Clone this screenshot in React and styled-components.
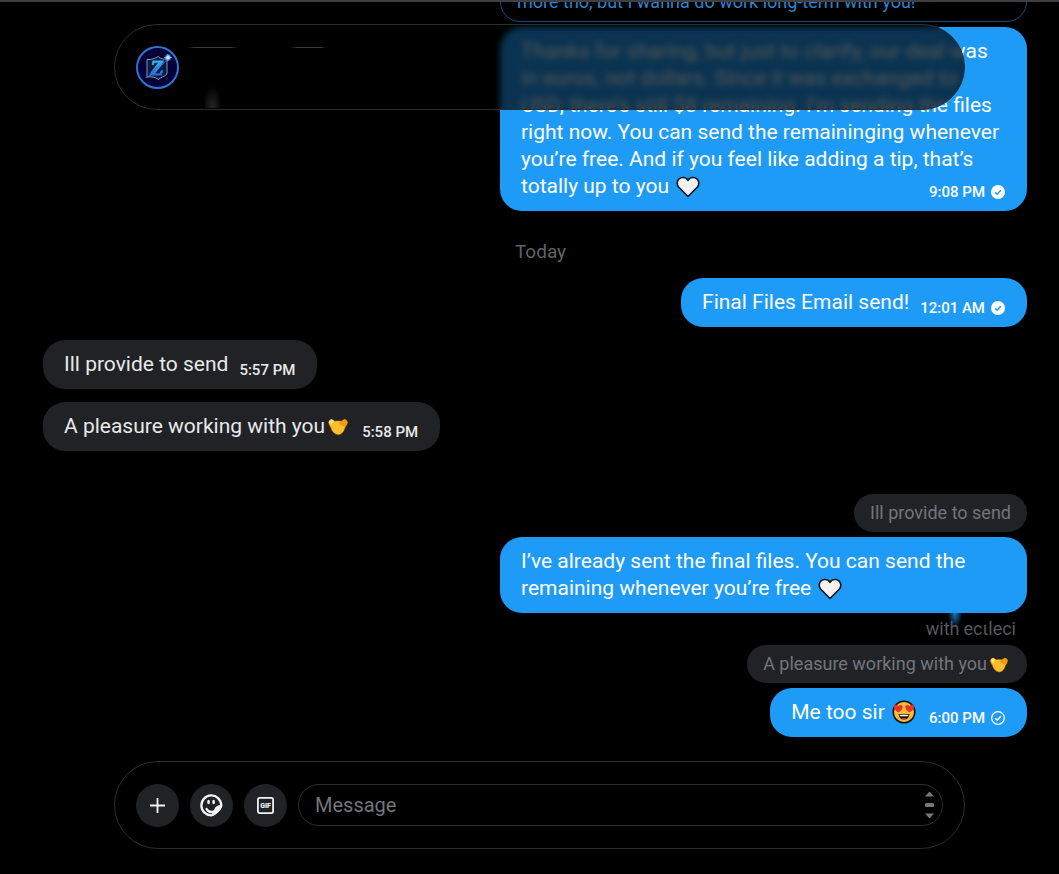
import React from "react";
import styled, { createGlobalStyle, css } from "styled-components";

const GlobalStyle = createGlobalStyle`
  *, *::before, *::after { box-sizing: border-box; }
  body {
    margin: 0;
    background: #000;
    color: #e7e9ea;
    font-family: Roboto, "Liberation Sans", sans-serif;
  }
`;

const Page = styled.div`
  position: relative;
  display: flex;
  flex-direction: column;
  height: 100vh;
  border-top: 2px solid #3e3f45;
  background: #000;
  overflow: hidden;
`;

const pill = css`
  border: 1px solid #2c2d30;
  border-radius: 44px;
`;

const Header = styled.header`
  ${pill}
  position: absolute;
  z-index: 2;
  top: 22px;
  left: 114px;
  right: 94px;
  height: 86px;
  display: flex;
  align-items: center;
  gap: 7px;
  padding: 0 21px;
  background: rgba(0, 0, 0, 0.67);
  backdrop-filter: blur(3px);
`;

const HeaderInfo = styled.div`
  align-self: flex-start;
  padding-top: 22px;
  display: flex;
  gap: 52px;
`;

const Dash = styled.span`
  width: ${(p) => p.$width}px;
  height: 1px;
  background: linear-gradient(to right, transparent, #3c3c3c 20%, #3c3c3c 85%, transparent);
`;

const Smudge = styled.span`
  position: absolute;
  left: 90px;
  bottom: 1px;
  width: 18px;
  height: 24px;
  background: radial-gradient(ellipse at 40% 100%, #262626, transparent 65%);
`;

const Feed = styled.main`
  flex: 1;
  min-height: 0;
  display: flex;
  flex-direction: column;
  justify-content: flex-end;
  padding: 0 32px 24px 43px;
`;

const Group = styled.section`
  flex: none;
  display: flex;
  flex-direction: column;
  align-items: ${(p) => (p.$mine ? "flex-end" : "flex-start")};
  gap: ${(p) => (p.$mine ? 5 : 13)}px;
  margin-top: ${(p) => p.$space || 0}px;
`;

const Quote = styled.blockquote`
  margin: 0;
  padding: 7px 16px;
  border-radius: 20px;
  background: #202226;
  color: #71767b;
  font-size: 18px;
  line-height: 24px;
  white-space: nowrap;
`;

const OutlineQuote = styled(Quote)`
  width: 527px;
  max-width: 100%;
  border: 1px solid #1c4a78;
  background: transparent;
  color: #2f83cf;
`;

const Bubble = styled.article`
  display: grid;
  grid-template-columns: ${(p) => (p.$wide ? "1fr auto" : "auto auto")};
  column-gap: 11px;
  width: ${(p) => (p.$wide ? "527px" : "auto")};
  max-width: 100%;
  padding: 11px 22px 11px 21px;
  border-radius: 22px;
  background: ${(p) => (p.$mine ? "#1d9bf6" : "#202226")};
  color: ${(p) => (p.$mine ? "#fff" : "#e7e9ea")};
`;

const Text = styled.p`
  grid-column: ${(p) => (p.$full ? "1 / -1" : "1")};
  margin: 0;
  font-size: 21px;
  line-height: 27px;
  white-space: pre-line;
`;

const Meta = styled.div`
  grid-column: 2;
  align-self: end;
  display: flex;
  align-items: center;
  gap: 6px;
  font-size: 15px;
  font-weight: 500;
  line-height: 16px;
  white-space: nowrap;
`;

const DayLabel = styled.div`
  flex: none;
  padding: 28px 0 13px 11px;
  text-align: center;
  color: #5f6368;
  font-size: 19px;
  line-height: 26px;
`;

const Remnant = styled.div`
  position: relative;
  height: 32px;
  padding: 4px 11px 4px 0;
  display: flex;
  gap: 4px;
  justify-content: flex-end;
  color: #55585c;
  font-size: 18px;
  line-height: 24px;

  &::before {
    content: "";
    position: absolute;
    right: 64px;
    top: 0;
    width: 16px;
    height: 16px;
    background: radial-gradient(ellipse at 50% 0, #1d78bd, transparent 65%);
  }
`;

const Emoji = styled.svg`
  display: inline-block;
  vertical-align: -5px;
  margin: 0 2px;
`;

const Composer = styled.form`
  ${pill}
  flex: none;
  display: flex;
  align-items: center;
  gap: 11px;
  height: 88px;
  margin: 0 94px 25px 114px;
  padding: 0 21px;
`;

const RoundButton = styled.button`
  flex: none;
  display: grid;
  place-items: center;
  width: 43px;
  height: 43px;
  padding: 0;
  border: 0;
  border-radius: 50%;
  background: #202226;
  color: #f2f3f4;
  cursor: pointer;
`;

const Field = styled.label`
  flex: 1;
  min-width: 0;
  display: flex;
  align-items: center;
  height: 42px;
  padding: 0 6px 0 16px;
  border: 1px solid #2c2d30;
  border-radius: 21px;
`;

const Input = styled.input`
  flex: 1;
  min-width: 0;
  padding: 0;
  border: 0;
  outline: 0;
  background: transparent;
  color: #e7e9ea;
  font: inherit;
  font-size: 20px;
  line-height: 27px;
  &::placeholder { color: #71767b; opacity: 1; }
`;

const Heart = () => (
  <Emoji width="24" height="22" viewBox="0 0 24 22" role="img" aria-label="white heart">
    <path d="M12 20.500 2.800 11.300C-.2 7.800 1.200 2 6.600 1.500 9.200 1.300 11 2.600 12 4.300 13 2.600 14.800 1.300 17.400 1.500 22.800 2 24.200 7.800 21.200 11.300Z" fill="#f6f1f0" stroke="#10151c" strokeWidth="1.600" strokeLinejoin="round" />
  </Emoji>
);

const Hands = ({ size = 22 }) => (
  <Emoji width={size} height={size} viewBox="0 0 22 22" role="img" aria-label="handshake">
    <path d="M1.400 6.500C1.800 4.500 3.500 3 4.800 3.200L7.500 5C9 4.500 13 4.500 14.500 5L17.200 3.200C18.500 3 20.300 4.500 20.600 6.500 20.300 8.500 19.500 10 18.300 11.500 17.500 15.500 14.500 18.800 11.500 18.900 8 18.800 4.800 16 3.600 11.500 2.400 10 1.700 8.500 1.400 6.500Z" fill="#fdbf2e" stroke="#5a3500" strokeWidth=".7" strokeLinejoin="round" />
    <path d="M17.200 3.200C18.500 3 20.300 4.500 20.600 6.500L18.500 10.500C16 10.500 13 9 11.500 7.200L14.500 5Z" fill="#f09a10" />
    <path d="M4.800 3.200 7.500 5 4.500 9 1.600 6.500C2 4.500 3.500 3 4.800 3.200Z" fill="#ffdc66" />
  </Emoji>
);

const HeartEyes = () => (
  <Emoji width="24" height="24" viewBox="0 0 24 24" role="img" aria-label="heart eyes">
    <circle cx="12" cy="12" r="10.800" fill="#fdbb3c" stroke="#1b1410" strokeWidth="1.500" />
    <path d="M6.500 12.500C3 10.500 1.800 8.500 2 6.500 2.400 4.400 5 4.200 6.500 6 8 4.200 10.600 4.800 10.700 7 10.700 9 9 11 6.500 12.500Z" fill="#ee3323" />
    <path d="M17.500 12.500C21 10.500 22.200 8.500 22 6.500 21.600 4.400 19 4.200 17.500 6 16 4.200 13.400 4.800 13.300 7 13.300 9 15 11 17.500 12.500Z" fill="#ee3323" />
    <path d="M6.500 14H17.500C17.200 17.700 15.200 19.500 12 19.500S6.800 17.700 6.500 14Z" fill="#1b1410" />
    <path d="M7.500 14.700H16.500L16.200 16.300H7.800Z" fill="#fff" />
    <path d="M9.500 18.300C10.500 17.500 13.500 17.500 14.500 18.300 13 19.200 11 19.200 9.500 18.300Z" fill="#ee3323" />
  </Emoji>
);

const Sent = ({ filled }) => (
  <svg width="14" height="14" viewBox="0 0 14 14" aria-hidden="true">
    <circle cx="7" cy="7" r={filled ? 7 : 6.3} fill={filled ? "#fff" : "none"} stroke={filled ? "none" : "#fff"} strokeWidth="1.300" />
    <path d="m4.200 7.200 2 2 3.600-4" fill="none" stroke={filled ? "#1d9bf6" : "#fff"} strokeWidth="1.400" />
  </svg>
);

const Avatar = () => (
  <svg width="43" height="43" viewBox="0 0 43 43" role="img" aria-label="Profile picture">
    <defs>
      <linearGradient id="zed" x1="0" y1="0" x2="0" y2="1">
        <stop offset="0" stopColor="#35d3ee" />
        <stop offset=".5" stopColor="#2a8fe0" />
        <stop offset="1" stopColor="#2443d0" />
      </linearGradient>
      <radialGradient id="spark">
        <stop offset="0" stopColor="#fff" />
        <stop offset=".4" stopColor="#8fd8ff" />
        <stop offset="1" stopColor="#2a9bff" stopOpacity="0" />
      </radialGradient>
    </defs>
    <circle cx="21.500" cy="21.500" r="20.500" fill="#030138" stroke="#2f74cf" strokeWidth="2" />
    <path d="M11 13.500C15 14 19 12.500 22 10.500 25 13 28 13.500 31 12.800V28C28.500 30.500 25.500 31 22.500 33.500 19.500 31 15 30.500 11 31Z" fill="#0a1c40" stroke="#98a2bd" strokeWidth=".9" />
    <text x="21" y="29" textAnchor="middle" fontFamily="Liberation Serif, serif" fontSize="22" fontWeight="700" fontStyle="italic" fill="url(#zed)" stroke="url(#zed)" strokeWidth="1.200">Z</text>
    <path d="M9.500 31.500C16 30 25 21 32 12" fill="none" stroke="#5b82d8" strokeWidth=".7" />
    <circle cx="32" cy="11.500" r="4" fill="url(#spark)" />
    <path d="M32 8v7M28 11.500h8" stroke="#bce9ff" strokeWidth=".5" />
  </svg>
);

const PlusIcon = () => (
  <svg width="17" height="17" viewBox="0 0 17 17" aria-hidden="true">
    <path d="M8.500 1v15M1 8.500h15" stroke="currentColor" strokeWidth="1.800" />
  </svg>
);

const StickerIcon = () => (
  <svg width="23" height="23" viewBox="0 0 22 22" aria-hidden="true">
    <path d="M20.300 10.500A9.500 9.500 0 1 0 11 20.400C13 20.400 20.300 14 20.300 10.500Z" fill="none" stroke="currentColor" strokeWidth="2.200" />
    <path d="M21 10.500C17 10.200 14.500 12 13.800 14.500 12.500 17 8.500 16.500 6.700 13L4.900 14.200C6.300 17.500 8.700 18.800 11.500 18.300L11 21.200C15 20.500 20 16 21.400 11.500Z" fill="currentColor" />
    <ellipse cx="8.200" cy="7.700" rx="1.300" ry="2.100" fill="currentColor" />
    <ellipse cx="13" cy="7.700" rx="1.300" ry="2.100" fill="currentColor" />
  </svg>
);

const GifIcon = () => (
  <svg width="19" height="19" viewBox="0 0 19 19" aria-hidden="true">
    <rect x="1.900" y="1.900" width="15.200" height="15.200" rx="1.800" fill="none" stroke="currentColor" strokeWidth="1.800" />
    <text x="9.500" y="12" textAnchor="middle" fontFamily="Roboto, sans-serif" fontSize="7" fontWeight="900" fill="currentColor">GIF</text>
  </svg>
);

const ScrollMarks = () => (
  <svg width="13" height="28" viewBox="0 0 13 28" fill="#77787b" aria-hidden="true">
    <path d="M6.500.500 11 5.500H2Z" />
    <rect x="2" y="12" width="9" height="4" rx="1.500" />
    <path d="M6.500 27.500 11 22.500H2Z" />
  </svg>
);

const longMessage = [
  "Thanks for sharing, but just to clarify, our deal was",
  "in euros, not dollars. Since it was exchanged to",
  "USD, there’s still $8 remaining. I’m sending the files",
  "right now. You can send the remaininging whenever",
  "you’re free. And if you feel like adding a tip, that’s",
].join("\n");

export default function App() {
  return (
    <Page>
      <GlobalStyle />
      <Header>
        <Avatar />
        <HeaderInfo>
          <Dash $width={52} />
          <Dash $width={36} />
        </HeaderInfo>
        <Smudge />
      </Header>

      <Feed>
        <Group $mine>
          <OutlineQuote>more tho, but I wanna do work long-term with you!</OutlineQuote>
          <Bubble $mine $wide>
            <Text $full>{longMessage}</Text>
            <Text>totally up to you <Heart /></Text>
            <Meta><time>9:08 PM</time><Sent filled /></Meta>
          </Bubble>
        </Group>

        <DayLabel>Today</DayLabel>

        <Group $mine>
          <Bubble $mine>
            <Text>Final Files Email send!</Text>
            <Meta><time>12:01 AM</time><Sent filled /></Meta>
          </Bubble>
        </Group>

        <Group $space={13}>
          <Bubble>
            <Text>Ill provide to send</Text>
            <Meta><time>5:57 PM</time></Meta>
          </Bubble>
          <Bubble>
            <Text>A pleasure working with you<Hands /></Text>
            <Meta><time>5:58 PM</time></Meta>
          </Bubble>
        </Group>

        <Group $mine $space={43}>
          <Quote>Ill provide to send</Quote>
          <Bubble $mine $wide>
            <Text $full>{"I’ve already sent the final files. You can send the\nremaining whenever you’re free "}<Heart /></Text>
          </Bubble>
        </Group>

        <Remnant><span>with</span><span>ecιleci</span></Remnant>

        <Group $mine>
          <Quote>A pleasure working with you<Hands size={20} /></Quote>
          <Bubble $mine>
            <Text>Me too sir <HeartEyes /></Text>
            <Meta><time>6:00 PM</time><Sent /></Meta>
          </Bubble>
        </Group>
      </Feed>

      <Composer onSubmit={(e) => e.preventDefault()}>
        <RoundButton type="button" aria-label="Add attachment"><PlusIcon /></RoundButton>
        <RoundButton type="button" aria-label="Add sticker"><StickerIcon /></RoundButton>
        <RoundButton type="button" aria-label="Add GIF"><GifIcon /></RoundButton>
        <Field>
          <Input type="text" aria-label="Message" placeholder="Message" />
          <ScrollMarks />
        </Field>
      </Composer>
    </Page>
  );
}
